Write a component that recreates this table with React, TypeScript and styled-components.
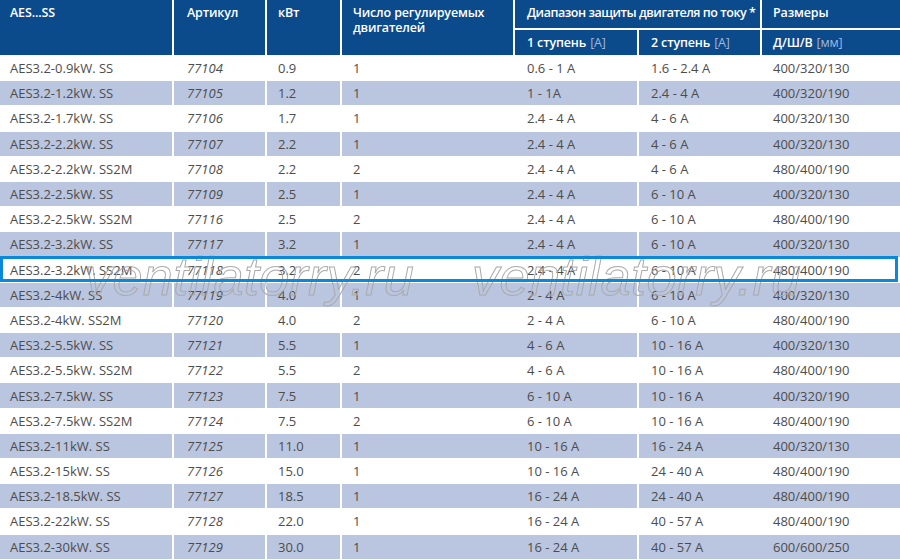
import React from 'react';
import styled, { createGlobalStyle } from 'styled-components';

const GlobalStyle = createGlobalStyle`
    html, body {
        margin: 0;
        padding: 0;
        background: #ffffff;
        overflow: hidden;
    }
    body {
        font-family: "Open Sans", "Noto Sans", sans-serif;
    }
`

const HEAD_BLUE = '#0b4a8b'
const ROW_BLUE = '#bac5df'

// widths of the body columns (border included); header uses them minus the 2px gap
const COLS = [174, 93, 75, 173, 124, 123, 138]
const PADS = [10, 13, 11, 11, 12, 12, 11]
// body rows have a white separator only after these columns
const SEPS = [true, true, true, false, true, false, false]

const Page = styled.div`
    position: relative;
    width: 900px;
    height: 560px;
    overflow: hidden;
`

const Head = styled.div`
    display: grid;
    grid-template-columns: 172px 91px 73px 171px 122px 121px 138px;
    grid-template-rows: 28px 25px;
    gap: 2px;
    height: 55px;
    background: #ffffff;
`

const HeadCell = styled.div<{ $col: number; $row?: string; $span?: number; $center?: boolean; $wrap?: boolean; $tight?: boolean; $pad: number }>`
    grid-column: ${p => p.$col} / span ${p => p.$span ?? 1};
    grid-row: ${p => p.$row ?? '1 / span 2'};
    background: ${HEAD_BLUE};
    color: #ffffff;
    font-weight: 600;
    font-size: 12.5px;
    letter-spacing: ${p => (p.$tight ? '-0.45px' : '-0.15px')};
    line-height: 15px;
    padding: ${p => (p.$center ? '0' : '5px')} 0 0 ${p => p.$pad}px;
    display: flex;
    align-items: ${p => (p.$center ? 'center' : 'flex-start')};
    white-space: ${p => (p.$wrap ? 'normal' : 'nowrap')};
`

const Unit = styled.span`
    font-weight: 400;
    color: #a3b8dc;
    margin-left: 4px;
`

const Body = styled.div`
    display: flex;
    flex-direction: column;
`

const Row = styled.div<{ $shade: boolean }>`
    display: grid;
    grid-template-columns: ${COLS.map(c => c + 'px').join(' ')};
    height: 25.2px;
    box-sizing: border-box;
    border-top: 1px solid #ffffff;
    background: ${p => (p.$shade ? ROW_BLUE : '#ffffff')};
    position: relative;
`

const Highlight = styled.div`
    position: absolute;
    top: -2px;
    bottom: 0;
    left: 0;
    right: 2px;
    border: 3px solid #0a88d9;
    z-index: 3;
    pointer-events: none;
`

const Cell = styled.div<{ $sep: boolean; $pad: number; $italic?: boolean }>`
    display: flex;
    align-items: center;
    padding-left: ${p => p.$pad}px;
    border-right: ${p => (p.$sep ? '2px solid #ffffff' : 'none')};
    font-size: 13px;
    color: #4d4d4d;
    font-style: ${p => (p.$italic ? 'italic' : 'normal')};
    white-space: nowrap;
    overflow: hidden;
`

const Watermark = styled.div`
    position: absolute;
    top: 249px;
    left: 0;
    right: 0;
    display: flex;
    gap: 58px;
    padding-left: 85px;
    z-index: 2;
    pointer-events: none;
`

const Mark = styled.span`
    font-family: "Liberation Sans", Arial, sans-serif;
    font-style: italic;
    font-size: 54px;
    line-height: 54px;
    letter-spacing: 0.4px;
    color: transparent;
    -webkit-text-stroke: 1px #aaaaaa;
`

type Item = [string, string, string, string, string, string, string]

const rows: Item[] = [
    ['AES3.2-0.9kW. SS', '77104', '0.9', '1', '0.6 - 1 A', '1.6 - 2.4 A', '400/320/130'],
    ['AES3.2-1.2kW. SS', '77105', '1.2', '1', '1 - 1A', '2.4 - 4 A', '400/320/190'],
    ['AES3.2-1.7kW. SS', '77106', '1.7', '1', '2.4 - 4 A', '4 - 6 A', '400/320/130'],
    ['AES3.2-2.2kW. SS', '77107', '2.2', '1', '2.4 - 4 A', '4 - 6 A', '400/320/130'],
    ['AES3.2-2.2kW. SS2M', '77108', '2.2', '2', '2.4 - 4 A', '4 - 6 A', '480/400/190'],
    ['AES3.2-2.5kW. SS', '77109', '2.5', '1', '2.4 - 4 A', '6 - 10 A', '400/320/130'],
    ['AES3.2-2.5kW. SS2M', '77116', '2.5', '2', '2.4 - 4 A', '6 - 10 A', '480/400/190'],
    ['AES3.2-3.2kW. SS', '77117', '3.2', '1', '2.4 - 4 A', '6 - 10 A', '400/320/130'],
    ['AES3.2-3.2kW. SS2M', '77118', '3.2', '2', '2.4 - 4 A', '6 - 10 A', '480/400/190'],
    ['AES3.2-4kW. SS', '77119', '4.0', '1', '2 - 4 A', '6 - 10 A', '400/320/130'],
    ['AES3.2-4kW. SS2M', '77120', '4.0', '2', '2 - 4 A', '6 - 10 A', '480/400/190'],
    ['AES3.2-5.5kW. SS', '77121', '5.5', '1', '4 - 6 A', '10 - 16 A', '400/320/130'],
    ['AES3.2-5.5kW. SS2M', '77122', '5.5', '2', '4 - 6 A', '10 - 16 A', '480/400/190'],
    ['AES3.2-7.5kW. SS', '77123', '7.5', '1', '6 - 10 A', '10 - 16 A', '400/320/190'],
    ['AES3.2-7.5kW. SS2M', '77124', '7.5', '2', '6 - 10 A', '10 - 16 A', '480/400/190'],
    ['AES3.2-11kW. SS', '77125', '11.0', '1', '10 - 16 A', '16 - 24 A', '400/320/130'],
    ['AES3.2-15kW. SS', '77126', '15.0', '1', '10 - 16 A', '24 - 40 A', '480/400/190'],
    ['AES3.2-18.5kW. SS', '77127', '18.5', '1', '16 - 24 A', '24 - 40 A', '480/400/190'],
    ['AES3.2-22kW. SS', '77128', '22.0', '1', '16 - 24 A', '40 - 57 A', '480/400/190'],
    ['AES3.2-30kW. SS', '77129', '30.0', '1', '16 - 24 A', '40 - 57 A', '600/600/250'],
]

const SELECTED = '77118'

const App = () => {
    return (
        <Page>
            <GlobalStyle />
            <Head>
                <HeadCell $col={1} $pad={PADS[0]}>AES...SS</HeadCell>
                <HeadCell $col={2} $pad={PADS[1]}>Артикул</HeadCell>
                <HeadCell $col={3} $pad={PADS[2]}>кВт</HeadCell>
                <HeadCell $col={4} $pad={PADS[3]} $wrap>
                    Число регулируемых двигателей
                </HeadCell>
                <HeadCell $col={5} $span={2} $row="1" $pad={PADS[4]} $tight>
                    Диапазон защиты двигателя по току *
                </HeadCell>
                <HeadCell $col={7} $row="1" $pad={PADS[6]}>Размеры</HeadCell>
                <HeadCell $col={5} $row="2" $center $pad={PADS[4]}>
                    1 ступень<Unit>[A]</Unit>
                </HeadCell>
                <HeadCell $col={6} $row="2" $center $pad={PADS[5]}>
                    2 ступень<Unit>[A]</Unit>
                </HeadCell>
                <HeadCell $col={7} $row="2" $center $pad={PADS[6]}>
                    Д/Ш/В<Unit>[мм]</Unit>
                </HeadCell>
            </Head>
            <Body>
                {rows.map((r, i) => (
                    <Row key={r[1]} $shade={i % 2 === 1}>
                        {r.map((v, c) => (
                            <Cell key={c} $sep={SEPS[c]} $pad={PADS[c]} $italic={c === 1}>
                                {v}
                            </Cell>
                        ))}
                        {r[1] === SELECTED ? <Highlight /> : null}
                    </Row>
                ))}
            </Body>
            <Watermark>
                <Mark>ventilatorry.ru</Mark>
                <Mark>ventilatorry.ru</Mark>
            </Watermark>
        </Page>
    );
};

export default App;
